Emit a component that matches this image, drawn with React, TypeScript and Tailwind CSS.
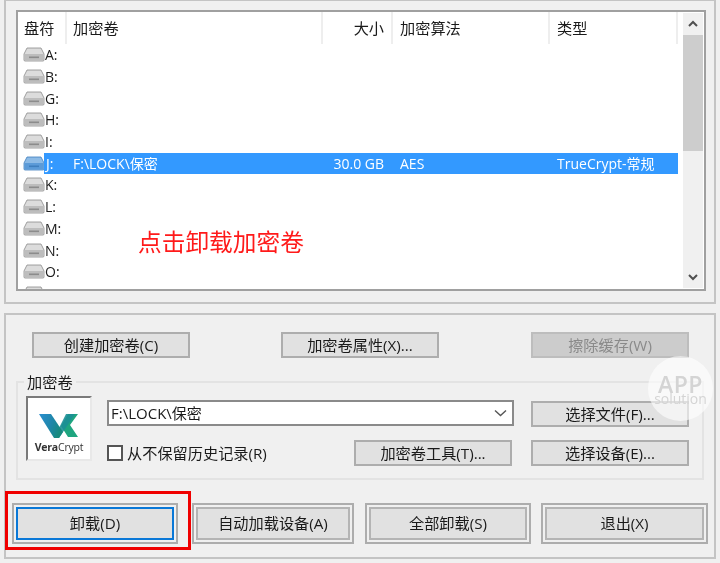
import type { ReactNode } from "react";

const DRIVES = ["A:", "B:", "G:", "H:", "I:", "J:", "K:", "L:", "M:", "N:", "O:", ""];

function DriveIcon({ active = false }: { active?: boolean }) {
  const top = active ? "#8dbbe6" : "#dcdcdc";
  const front = active ? "#5c9bd8" : "#bdbdbd";
  const edge = active ? "#3f7fbe" : "#8c8c8c";
  return (
    <svg width="22" height="15" viewBox="0 0 22 15" className="shrink-0">
      <path d="M4 1h14l3 6v6a1 1 0 0 1-1 1H2a1 1 0 0 1-1-1V7z" fill={top} stroke={edge} strokeWidth="0.8" />
      <rect x="1.5" y="7" width="19" height="6.5" rx="1" fill={front} />
      <rect x="6" y="9.5" width="10" height="1.6" fill={edge} />
    </svg>
  );
}

function WinButton({
  children,
  className = "",
  disabled = false,
}: {
  children: ReactNode;
  className?: string;
  disabled?: boolean;
}) {
  return (
    <button
      className={`h-[26px] w-[158px] shrink-0 border-2 flex items-center justify-center text-[15.2px] ${
        disabled ? "border-[#bdbdbd] bg-[#cccccc] text-[#8a8a8a]" : "border-[#adadad] bg-[#e1e1e1] text-[#1a1a1a]"
      } ${className}`}
    >
      {children}
    </button>
  );
}

function BigButton({ children, focused = false, className = "" }: { children: ReactNode; focused?: boolean; className?: string }) {
  return (
    <button className={`h-[41px] border-2 border-[#adadad] p-[2px] shrink-0 ${className}`}>
      <span
        className={`h-full w-full flex items-center justify-center bg-[#e1e1e1] text-[15.2px] text-[#1a1a1a] border-2 ${
          focused ? "border-[#0a78d7]" : "border-[#b4b4b4]"
        }`}
      >
        {children}
      </span>
    </button>
  );
}

function VeraLogo() {
  return (
    <div className="w-[66px] h-[65px] shrink-0 border-2 border-t-[#7a7a7a] border-l-[#7a7a7a] border-r-[#e8e8e8] border-b-[#e8e8e8] bg-white flex flex-col items-center pt-[15px]">
      <svg width="40" height="25" viewBox="0 0 40 25">
        <defs>
          <linearGradient id="vc-v" x1="0" y1="0" x2="1" y2="0.4">
            <stop offset="0" stopColor="#2a8fd0" />
            <stop offset="0.6" stopColor="#1f86a8" />
            <stop offset="1" stopColor="#178a7c" />
          </linearGradient>
        </defs>
        <polygon points="29,1 39,1 31,12 39,24 29,24 22,13" fill="#1fa57f" />
        <polygon points="15,25 20,25 36,1 27,1" fill="#1c8f96" opacity="0.9" />
        <polygon points="0,1 12,1 24,19 20,25 15,25" fill="url(#vc-v)" />
      </svg>
      <span className="text-[10.5px] leading-[12px] mt-[3px] text-[#333] font-['Open_Sans',sans-serif] tracking-[-0.2px]">
        <b>Vera</b>Crypt
      </span>
    </div>
  );
}

export default function App() {
  return (
    <div className="relative w-[720px] h-[563px] overflow-hidden bg-[#f0f0f0] text-[#1a1a1a] font-['Open_Sans','Noto_Sans_CJK_SC',sans-serif] flex flex-col blur-[0.3px]">
      {/* list panel */}
      <div className="mx-[4px] h-[304px] shrink-0 border-2 border-t-[1px] border-[#c4c4c4] pt-[9px] pl-[10px] pr-[8px]">
        <div className="h-[281px] border-2 border-[#a0a0a0] bg-white flex overflow-hidden">
          <div className="flex-1 min-w-0">
            <div className="flex h-[32px] text-[15.2px] leading-[32px]">
              <div className="w-[49px] pl-[6px] border-r-2 border-[#eeeeee]">盘符</div>
              <div className="w-[256px] pl-[6px] border-r-2 border-[#eeeeee]">加密卷</div>
              <div className="w-[70px] pr-[7px] text-right border-r-2 border-[#eeeeee]">大小</div>
              <div className="w-[157px] pl-[7px] border-r-2 border-[#eeeeee]">加密算法</div>
              <div className="w-[128px] pl-[7px] border-r-2 border-[#eeeeee]">类型</div>
            </div>
            <div className="pl-[5px]">
              {DRIVES.map((d) => {
                const active = d === "J:";
                return (
                  <div key={d} className="flex items-center h-[21.7px] text-[14px]">
                    <DriveIcon active={active} />
                    {active ? (
                      <div className="flex items-center h-[21px] w-[634px] -ml-[1px] bg-[#3399ff] text-white">
                        <span className="w-[29px] pl-[2px]">{d}</span>
                        <span className="w-[246px]">F:\LOCK\保密</span>
                        <span className="w-[65px] text-right">30.0 GB</span>
                        <span className="w-[173px] pl-[16px]">AES</span>
                        <span>TrueCrypt-常规</span>
                      </div>
                    ) : (
                      <span>{d}</span>
                    )}
                  </div>
                );
              })}
            </div>
          </div>
          {/* scrollbar */}
          <div className="w-[20px] mr-[1px] mt-[1px] mb-[1px] shrink-0 bg-[#f0f0f0] flex flex-col items-center">
            <svg width="12" height="22" viewBox="0 0 12 22" className="shrink-0">
              <path d="M2 13l4-4 4 4" fill="none" stroke="#505050" strokeWidth="2" />
            </svg>
            <div className="w-full h-[116px] bg-[#cdcdcd]" />
            <div className="flex-1" />
            <svg width="12" height="20" viewBox="0 0 12 20" className="shrink-0">
              <path d="M2 7l4 4 4-4" fill="none" stroke="#505050" strokeWidth="2" />
            </svg>
          </div>
        </div>
      </div>

      {/* control panel */}
      <div className="mx-[4px] mt-[9px] h-[246px] shrink-0 border-2 border-[#c4c4c4] pt-[17px] px-[10px]">
        <div className="flex pl-[16px]">
          <WinButton>创建加密卷(C)</WinButton>
          <WinButton className="ml-[91px]">加密卷属性(X)...</WinButton>
          <WinButton disabled className="ml-[92px]">擦除缓存(W)</WinButton>
        </div>
        <div className="relative mt-[23px] h-[99px] border-2 border-[#e3e3e3] pt-[13px] pl-[8px]">
          <span className="absolute -top-[11px] left-[6px] bg-[#f0f0f0] px-[3px] text-[15.2px] leading-[20px]">加密卷</span>
          <div className="flex gap-[15px]">
            <VeraLogo />
            <div className="flex-1 flex flex-col">
              <div className="flex">
                <div className="mt-[4px] h-[26px] w-[407px] border-2 border-[#8a8a8a] bg-white flex items-center justify-between pl-[2px] pr-[5px] text-[15px]">
                  <span>F:\LOCK\保密</span>
                  <svg width="13" height="8" viewBox="0 0 13 8">
                    <path d="M1 1.5l5.5 5 5.5-5" fill="none" stroke="#555" strokeWidth="1.4" />
                  </svg>
                </div>
                <WinButton className="ml-[17px] mt-[5px]">选择文件(F)...</WinButton>
              </div>
              <div className="flex mt-[13px] items-center h-[26px]">
                <span className="w-[16px] h-[16px] border-2 border-[#555] bg-white shrink-0" />
                <span className="ml-[4px] w-[226px] text-[15.2px] whitespace-nowrap">从不保留历史记录(R)</span>
                <WinButton className="ml-[1px]">加密卷工具(T)...</WinButton>
                <WinButton className="ml-[19px]">选择设备(E)...</WinButton>
              </div>
            </div>
          </div>
        </div>
        <div className="flex mt-[23px] -ml-[4px]">
          <BigButton focused className="w-[166px]">卸载(D)</BigButton>
          <BigButton className="w-[162px] ml-[14px]">自动加载设备(A)</BigButton>
          <BigButton className="w-[166px] ml-[11px]">全部卸载(S)</BigButton>
          <BigButton className="w-[167px] ml-[10px]">退出(X)</BigButton>
        </div>
      </div>

      {/* annotation */}
      <span className="absolute left-[138px] top-[227px] text-[23.7px] leading-[30px] text-[#ff1a1a]">点击卸载加密卷</span>
      <div className="absolute left-[5px] top-[491px] w-[186px] h-[59px] border-[3px] border-[#f00000]" />

      {/* watermark */}
      <div className="absolute left-[648px] top-[356px] w-[65px] h-[65px] rounded-full bg-white/60 flex flex-col items-center pt-[18px] text-[#d4d4d4]">
        <span className="text-[23px] leading-[20px] font-semibold tracking-[0.5px]">APP</span>
        <span className="text-[14px] leading-[10px]">solution</span>
      </div>
    </div>
  );
}
